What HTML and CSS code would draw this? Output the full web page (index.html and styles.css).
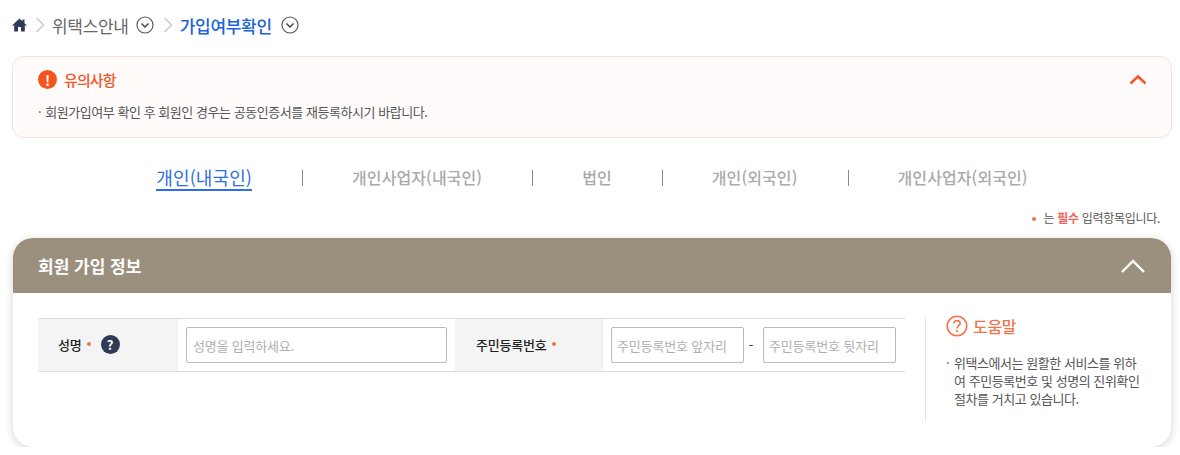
FILE: index.html
```html
<!DOCTYPE html>
<html lang="ko">
<head>
    <meta charset="UTF-8">
    <meta name="viewport" content="width=device-width, initial-scale=1.0">
    <title>가입여부확인</title>
    <link rel="stylesheet" href="styles.css">
</head>
<body>
    <div class="container">
        <div class="breadcrumb">
            <svg class="home" width="15" height="14" viewBox="0 0 15 14"><path d="M7.5 0.5 L10.5 3.3 V1.5 H12.5 V5.2 L15 7.5 H12.8 V13.5 H9 V9 H6 V13.5 H2.2 V7.5 H0 Z" fill="#2f3a56"/></svg>
            <svg class="sep" width="10" height="16" viewBox="0 0 10 16"><path d="M1.5 1 L8.5 8 L1.5 15" fill="none" stroke="#999" stroke-width="1"/></svg>
            <span class="crumb">위택스안내</span>
            <svg class="toggle" width="18" height="18" viewBox="0 0 19 19"><circle cx="9.5" cy="9.5" r="8.5" fill="none" stroke="#555" stroke-width="1.2"/><path d="M5.8 8 L9.5 11.6 L13.2 8" fill="none" stroke="#444" stroke-width="1.6"/></svg>
            <svg class="sep sep-next" width="10" height="16" viewBox="0 0 10 16"><path d="M1.5 1 L8.5 8 L1.5 15" fill="none" stroke="#999" stroke-width="1"/></svg>
            <span class="crumb current">가입여부확인</span>
            <svg class="toggle" width="18" height="18" viewBox="0 0 19 19"><circle cx="9.5" cy="9.5" r="8.5" fill="none" stroke="#555" stroke-width="1.2"/><path d="M5.8 8 L9.5 11.6 L13.2 8" fill="none" stroke="#444" stroke-width="1.6"/></svg>
        </div>

        <div class="notice">
            <div class="notice-head">
                <div class="notice-title">
                    <span class="alert-icon">!</span>
                    <span>유의사항</span>
                </div>
                <svg width="18" height="11" viewBox="0 0 18 11"><path d="M1.5 9.5 L9 2.5 L16.5 9.5" fill="none" stroke="#f5542a" stroke-width="2.4"/></svg>
            </div>
            <p class="notice-text"><span class="dot">·</span>회원가입여부 확인 후 회원인 경우는 공동인증서를 재등록하시기 바랍니다.</p>
        </div>

        <ul class="tabs">
            <li class="tab active">개인(내국인)</li>
            <li class="tab">개인사업자(내국인)</li>
            <li class="tab">법인</li>
            <li class="tab">개인(외국인)</li>
            <li class="tab">개인사업자(외국인)</li>
        </ul>

        <p class="required-note"><span class="req-dot"></span>는 <strong>필수</strong> 입력항목입니다.</p>

        <div class="card">
            <div class="card-head">
                <h2>회원 가입 정보</h2>
                <svg width="26" height="16" viewBox="0 0 26 16"><path d="M2 14 L13 3 L24 14" fill="none" stroke="#fff" stroke-width="2.4"/></svg>
            </div>
            <div class="card-body">
                <div class="form-row">
                    <div class="form-label name-label">
                        <span>성명</span><span class="req-dot"></span>
                        <span class="help-badge">?</span>
                    </div>
                    <div class="form-field name-field">
                        <input class="text-input" type="text" placeholder="성명을 입력하세요.">
                    </div>
                    <div class="form-label id-label">
                        <span>주민등록번호</span><span class="req-dot"></span>
                    </div>
                    <div class="form-field id-field">
                        <input class="text-input" type="text" placeholder="주민등록번호 앞자리">
                        <span class="dash">-</span>
                        <input class="text-input" type="text" placeholder="주민등록번호 뒷자리">
                    </div>
                </div>
                <div class="help">
                    <div class="help-title">
                        <svg width="22" height="22" viewBox="0 0 22 22"><circle cx="11" cy="11" r="9.8" fill="none" stroke="#f4734a" stroke-width="1.6"/><path d="M7.8 8.6 C7.8 6.6 9.2 5.6 11 5.6 C12.9 5.6 14.2 6.8 14.2 8.4 C14.2 10.6 11 10.8 11 13.4" fill="none" stroke="#f4734a" stroke-width="1.6"/><circle cx="11" cy="16.2" r="1.1" fill="#f4734a"/></svg>
                        <span>도움말</span>
                    </div>
                    <p class="help-text">위택스에서는 원활한 서비스를 위하여 주민등록번호 및 성명의 진위확인 절차를 거치고 있습니다.</p>
                </div>
            </div>
        </div>
    </div>
</body>
</html>
```

FILE: styles.css
```css
* {
    box-sizing: border-box;
}

body {
    margin: 0;
    background-color: #fff;
    font-family: "Noto Sans CJK KR", "Noto Sans", sans-serif;
    color: #333;
}

.container {
    padding: 13px 8px 0 12px;
}

.breadcrumb {
    display: flex;
    align-items: center;
    height: 24px;
}

.home {
    margin-right: 8px;
}

.sep {
    margin-right: 7px;
}

.sep-next {
    margin-left: 9px;
}

.crumb {
    font-size: 17px;
    letter-spacing: -0.3px;
    color: #666;
    margin-right: 7px;
}

.crumb.current {
    color: #1a63d8;
    font-weight: 500;
    margin-right: 9px;
}

.notice {
    margin-top: 19px;
    height: 82px;
    padding: 12px 24px 0 25px;
    background-color: #fffbfa;
    border: 1px solid #fde0d8;
    border-radius: 12px;
}

.notice-head {
    display: flex;
    align-items: center;
    justify-content: space-between;
}

.notice-title {
    display: flex;
    align-items: center;
    gap: 7px;
    font-size: 15px;
    font-weight: 500;
    letter-spacing: -0.9px;
    color: #f5542a;
}

.alert-icon {
    display: flex;
    align-items: center;
    justify-content: center;
    width: 19px;
    height: 19px;
    border-radius: 50%;
    background-color: #f5541f;
    color: #fff;
    font-size: 14px;
    font-weight: 700;
    letter-spacing: 0;
}

.notice-text {
    margin: 12px 0 0;
    font-size: 13px;
    letter-spacing: -0.45px;
    color: #555;
}

.dot {
    margin-right: 4px;
}

.tabs {
    display: flex;
    justify-content: center;
    margin: 26px 0 0;
    padding: 0;
    list-style: none;
}

.tab {
    position: relative;
    padding: 0 50px;
    font-size: 16px;
    line-height: 26px;
    letter-spacing: 0.1px;
    color: #aaa;
    font-weight: 500;
}

.tab + .tab::before {
    content: "";
    position: absolute;
    left: 0;
    top: 6px;
    height: 16px;
    width: 1px;
    background-color: #888;
}

.tab.active {
    color: #2f6fdf;
    font-size: 18px;
    font-weight: 400;
}

.tab.active::after {
    content: "";
    position: absolute;
    left: 50px;
    right: 50px;
    bottom: -1px;
    height: 2px;
    background-color: #2f6fdf;
}

.required-note {
    margin: 19px 12px 0 0;
    text-align: right;
    font-size: 12px;
    line-height: 18px;
    letter-spacing: -0.3px;
    color: #555;
}

.required-note strong {
    color: #f4605a;
}

.required-note .req-dot {
    margin: 0 7px 2px 0;
}

.req-dot {
    display: inline-block;
    width: 4px;
    height: 4px;
    border-radius: 50%;
    background-color: #f4734a;
    vertical-align: middle;
}

.card {
    margin: 11px 1px 0 1px;
    height: 209px;
    background-color: #fff;
    border-radius: 20px;
    box-shadow: 0 2px 8px rgba(0, 0, 0, 0.18);
    overflow: hidden;
}

.card-head {
    display: flex;
    align-items: center;
    justify-content: space-between;
    height: 55px;
    padding: 0 25px;
    background-color: #9b907e;
}

.card-head h2 {
    margin: 0;
    font-size: 17px;
    font-weight: 700;
    color: #fff;
}

.card-body {
    display: flex;
    padding: 25px 0 0 25px;
}

.form-row {
    display: flex;
    flex-shrink: 0;
    width: 867px;
    height: 54px;
    border-top: 1px solid #ddd;
    border-bottom: 1px solid #ddd;
}

.form-label {
    display: flex;
    flex-shrink: 0;
    align-items: center;
    padding-bottom: 2px;
    background-color: #f4f4f4;
    font-size: 13px;
    font-weight: 500;
    letter-spacing: -0.2px;
    color: #222;
}

.form-label .req-dot {
    margin-left: 5px;
}

.name-label {
    width: 140px;
    padding-left: 20px;
    border-right: 1px solid #eee;
}

.id-label {
    width: 148px;
    padding-left: 21px;
    border-right: 1px solid #eee;
}

.help-badge {
    display: flex;
    align-items: center;
    justify-content: center;
    width: 19px;
    height: 19px;
    margin-left: 10px;
    border-radius: 50%;
    background-color: #2f3a56;
    color: #fff;
    font-size: 13px;
    font-weight: 700;
}

.form-field {
    display: flex;
    align-items: center;
}

.name-field {
    flex-shrink: 0;
    width: 277px;
    padding: 0 8px;
}

.id-field {
    flex: 1;
    min-width: 0;
    padding: 0 9px 0 8px;
}

.text-input {
    width: 100%;
    height: 36px;
    padding: 0 5px;
    border: 1px solid #bbb;
    border-radius: 2px;
    font-family: inherit;
    font-size: 13px;
    letter-spacing: -0.15px;
    background-color: #fff;
}

.id-field .text-input {
    flex: none;
    width: 133px;
}

.name-field .text-input {
    padding: 0 6px;
    letter-spacing: -0.2px;
}

.text-input::placeholder {
    color: #b0b0b0;
}

.dash {
    width: 19px;
    padding-right: 5px;
    text-align: center;
    font-size: 14px;
    color: #444;
}

.help {
    width: 225px;
    height: 104px;
    margin-left: 20px;
    padding: 0 0 0 20px;
    border-left: 1px solid #e6e6e6;
}

.help-title {
    display: flex;
    align-items: center;
    gap: 5px;
    height: 20px;
    margin-top: -2px;
    font-size: 16px;
    font-weight: 500;
    color: #f4734a;
    letter-spacing: -0.3px;
}

.help-text {
    position: relative;
    width: 196px;
    margin: 18px 0 0;
    padding-left: 8px;
    font-size: 13px;
    line-height: 18px;
    letter-spacing: -0.45px;
    color: #555;
}

.help-text::before {
    content: "·";
    position: absolute;
    left: 0;
}
```
